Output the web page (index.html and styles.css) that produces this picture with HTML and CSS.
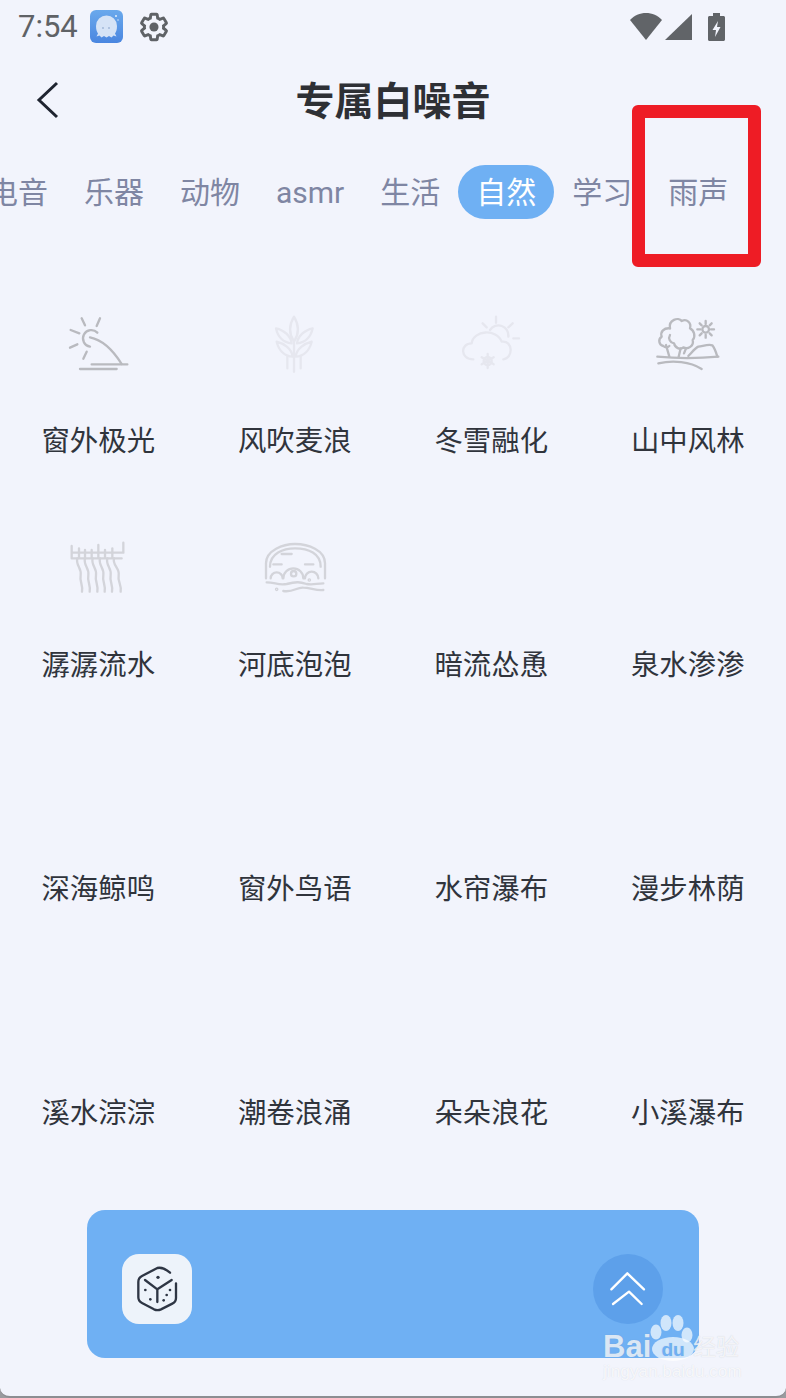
FILE: index.html
```html
<!DOCTYPE html>
<html lang="zh-CN">
<head>
    <meta charset="UTF-8">
    <meta name="viewport" content="width=device-width, initial-scale=1.0">
    <title>专属白噪音</title>
    <link rel="stylesheet" href="styles.css">
</head>
<body>
    <div class="page">
        <div class="status-bar">
            <span class="status-time">7:54</span>
            <svg class="app-icon" viewBox="0 0 33 33">
                <defs>
                    <linearGradient id="appBg" x1="0" y1="0" x2="0" y2="1">
                        <stop offset="0" stop-color="#6aa9ec"/>
                        <stop offset="1" stop-color="#4a86e0"/>
                    </linearGradient>
                </defs>
                <rect width="33" height="33" rx="6" fill="url(#appBg)"/>
                <path d="M6 16a10.500 10.500 0 0 1 21 0c0 4-1 6-2 7.500l1.500 3-3-1-2 2-2.500-1.500-2.500 1.500-2.500-1.500-2.500 1.500-2-2-3 1 1.500-3C7 22 6 20 6 16z" fill="#d5e3f6"/>
                <circle cx="13" cy="18" r="0.900" fill="#9db4d6"/>
                <circle cx="19" cy="18" r="0.900" fill="#9db4d6"/>
                <circle cx="26" cy="6" r="1" fill="#e6f0fb"/>
                <circle cx="28" cy="10" r="0.700" fill="#e6f0fb"/>
            </svg>
            <svg class="gear-icon" viewBox="0 0 24 24">
                <path d="M19.14 12.94c.04-.3.06-.61.06-.94 0-.32-.02-.64-.07-.94l2.030-1.580c.18-.14.23-.41.12-.61l-1.920-3.320c-.12-.22-.37-.29-.59-.22l-2.390.96c-.5-.38-1.030-.7-1.620-.94l-.36-2.540c-.04-.24-.24-.41-.48-.41h-3.840c-.24 0-.43.17-.47.41l-.36 2.540c-.59.24-1.130.57-1.620.94l-2.390-.96c-.22-.08-.47 0-.59.22L2.740 8.870c-.12.21-.08.47.12.61l2.030 1.580c-.05.3-.09.63-.09.94s.02.64.07.94l-2.030 1.580c-.18.14-.23.41-.12.61l1.920 3.320c.12.22.37.29.59.22l2.390-.96c.5.38 1.030.7 1.620.94l.36 2.540c.05.24.24.41.48.41h3.840c.24 0 .44-.17.47-.41l.36-2.540c.59-.24 1.130-.56 1.620-.94l2.390.96c.22.08.47 0 .59-.22l1.920-3.320c.12-.22.07-.47-.12-.61l-2.010-1.580z" fill="none" stroke="#5f6266" stroke-width="2.200"/>
                <circle cx="12" cy="12" r="3.400" fill="#5f6266"/>
            </svg>
            <div class="status-right">
                <svg class="wifi-icon" viewBox="0 0 32 27"><path d="M0 7C4 2.500 10 0 16 0s12 2.500 16 7L16 27z"/></svg>
                <svg class="signal-icon" viewBox="0 0 27 26"><path d="M27 0v26H0z"/></svg>
                <svg class="battery-icon" viewBox="0 0 17 28">
                    <path d="M5 0h7v3h3.500c.8 0 1.500.7 1.500 1.500V26.500c0 .8-.7 1.500-1.500 1.500h-14C.7 28 0 27.300 0 26.500V4.500C0 3.700.7 3 1.500 3H5z"/>
                    <path d="M10 8L4.500 17H8l-1 7 5.500-10H9z" fill="#f2f4fc"/>
                </svg>
            </div>
        </div>

        <div class="header">
            <svg class="back-icon" viewBox="0 0 24 40"><path d="M21 3L3 20l18 17"/></svg>
            <h1>专属白噪音</h1>
        </div>

        <div class="tabs">
            <span class="tab">电音</span>
            <span class="tab">乐器</span>
            <span class="tab">动物</span>
            <span class="tab">asmr</span>
            <span class="tab">生活</span>
            <span class="tab active">自然</span>
            <span class="tab">学习</span>
            <span class="tab">雨声</span>
        </div>

        <div class="sound-grid">
            <div class="sound">
                <svg class="sound-icon dark" viewBox="78 36 192 192">
                    <path d="M125 55l10 21M180 55l-10 23M92 90l26 10M90 143l22-10M130 176l10-21"/>
                    <path d="M172 98a25 25 0 1 0-22 42"/>
                    <path d="M150 112c40 8 70 40 95 80"/>
                    <path d="M155 193h107M120 207h110"/>
                </svg>
                <div class="sound-name">窗外极光</div>
            </div>
            <div class="sound">
                <svg class="sound-icon faint" viewBox="669 36 192 192">
                    <path d="M762 50c-12 20-20 45 0 75 20-30 12-55 0-75z"/>
                    <path d="M708 85c25 5 45 25 47 45-25-2-42-20-47-45zM818 85c-25 5-45 25-47 45 25-2 42-20 47-45z"/>
                    <path d="M710 125c20 5 45 20 48 45-25-2-42-20-48-45zM815 125c-20 5-45 20-48 45 25-2 42-20 48-45z"/>
                    <path d="M762 125v90M742 170v35M782 170v35"/>
                </svg>
                <div class="sound-name">风吹麦浪</div>
            </div>
            <div class="sound">
                <svg class="sound-icon faint" viewBox="57 36 192 192">
                    <path d="M168 50v18M128 70l12 12M218 70l-13 12M220 115h17"/>
                    <path d="M150 90a30 30 0 0 1 55 20"/>
                    <path d="M100 178c-40 0-40-48-5-48 5-40 75-45 90-5 35-5 35 50 5 53"/>
                    <path d="M143 162v42M125 172l36 21M161 172l-36 21"/>
                    <circle cx="143" cy="183" r="12"/>
                </svg>
                <div class="sound-name">冬雪融化</div>
            </div>
            <div class="sound">
                <svg class="sound-icon dark" viewBox="648 36 192 192">
                    <path d="M690 85c-5-25 25-35 35-22 15-8 30 5 25 22 12 5 18 25 8 35 5 18-15 30-28 22-10 8-25 2-28-12-12-2-18-15-12-25"/>
                    <path d="M690 85c-18-2-30 10-25 25-12 8-8 25 5 28 5 5 15 5 18 0"/>
                    <path d="M678 135l10 35M722 145l-6 25M738 145l-6 15"/>
                    <circle cx="797" cy="88" r="10"/>
                    <path d="M797 63v9M797 104v9M772 88h9M813 88h9M779 70l6 6M809 100l6 6M815 70l-6 6M785 100l-6 6"/>
                    <path d="M745 168c10-10 20-24 30-28 15-2 30-8 42-4 8 10 12 24 15 34"/>
                    <path d="M652 170c60 6 120 6 183 0"/>
                    <path d="M655 190c45-10 95-5 130 17"/>
                </svg>
                <div class="sound-name">山中风林</div>
            </div>

            <div class="sound">
                <svg class="sound-icon mid" viewBox="48 18 192 192">
                    <path d="M65 48v37M220 38v30M65 68h155M65 85h150M87 55v30M105 60v25M125 60v25M145 45v40M165 60v25M187 55v30"/>
                    <path d="M82 85c-6 20 14 30 10 50s8 30 4 50M105 85c-6 20 14 30 10 50s8 30 4 50M128 85c-6 20 14 30 10 50s8 30 4 50M150 85c-6 20 14 30 10 50s8 30 4 50M172 85c-6 20 14 30 10 50s8 30 4 50M192 85c-6 20 18 30 14 50s10 30 6 50"/>
                </svg>
                <div class="sound-name">潺潺流水</div>
            </div>
            <div class="sound">
                <svg class="sound-icon mid" viewBox="639 18 192 192">
                    <path d="M648 145v-45c0-40 52-58 87-58 40 0 90 18 90 58v45"/>
                    <path d="M660 110c0-40 40-55 75-55 40 0 77 15 77 55"/>
                    <path d="M662 145a18 18 0 0 1 36 0M700 145a30 30 0 0 1 60 0M765 145a20 20 0 0 1 40 0"/>
                    <circle cx="731" cy="131" r="8"/>
                    <path d="M695 72h30M670 103h25M765 103h25"/>
                    <path d="M650 157c25 0 35 10 60 5 30-8 40-6 60 0 20 4 30-2 50-2M700 183c30 5 40-12 60-10 20 0 40 10 60 7"/>
                    <circle cx="680" cy="178" r="2"/>
                    <circle cx="778" cy="150" r="2"/>
                </svg>
                <div class="sound-name">河底泡泡</div>
            </div>
            <div class="sound"><div class="icon-slot"></div><div class="sound-name">暗流怂恿</div></div>
            <div class="sound"><div class="icon-slot"></div><div class="sound-name">泉水渗渗</div></div>

            <div class="sound"><div class="icon-slot"></div><div class="sound-name">深海鲸鸣</div></div>
            <div class="sound"><div class="icon-slot"></div><div class="sound-name">窗外鸟语</div></div>
            <div class="sound"><div class="icon-slot"></div><div class="sound-name">水帘瀑布</div></div>
            <div class="sound"><div class="icon-slot"></div><div class="sound-name">漫步林荫</div></div>

            <div class="sound"><div class="icon-slot"></div><div class="sound-name">溪水淙淙</div></div>
            <div class="sound"><div class="icon-slot"></div><div class="sound-name">潮卷浪涌</div></div>
            <div class="sound"><div class="icon-slot"></div><div class="sound-name">朵朵浪花</div></div>
            <div class="sound"><div class="icon-slot"></div><div class="sound-name">小溪瀑布</div></div>
        </div>

        <div class="player">
            <div class="dice-btn">
                <svg viewBox="156 192 210 210">
                    <path d="M300 248c-12-10-26-17-38-14l-46 24c-8 4-11 8-11 18v46c0 9 3 13 11 17l36 19c7 3 14 3 21 0l34-17c8-4 11-8 11-17v-44"/>
                    <path d="M225 270l37 28 43-28M262 298v38"/>
                    <circle class="dot" cx="264" cy="262" r="5"/>
                    <circle class="dot" cx="226" cy="300" r="4"/>
                    <circle class="dot" cx="241" cy="328" r="4"/>
                    <circle class="dot" cx="300" cy="300" r="4"/>
                    <circle class="dot" cx="290" cy="315" r="4"/>
                    <circle class="dot" cx="281" cy="331" r="4"/>
                </svg>
            </div>
            <div class="up-btn">
                <svg viewBox="162 192 210 210">
                    <path d="M217 298l48-48 50 48M222 342l48-37 38 37"/>
                </svg>
            </div>
        </div>

        <!-- red marker drawn on top of the screenshot -->
        <div class="marker"></div>

        <div class="watermark">
            <div class="wm-logo">
                <span class="wm-bai">Bai</span>
                <svg class="wm-paw" viewBox="0 0 50 50">
                    <ellipse cx="8" cy="18" rx="5.500" ry="7.500"/>
                    <ellipse cx="18" cy="9" rx="5.500" ry="8"/>
                    <ellipse cx="30" cy="9" rx="5.500" ry="8"/>
                    <ellipse cx="39" cy="21" rx="5.500" ry="7.500"/>
                    <ellipse cx="25" cy="35" rx="21" ry="12"/>
                    <text x="25" y="42" text-anchor="middle">du</text>
                </svg>
                <span class="wm-jy">经验</span>
            </div>
            <div class="wm-url">jingyan.baidu.com</div>
        </div>
    </div>
</body>
</html>
```

FILE: styles.css
```css
* {
    margin: 0;
    padding: 0;
    box-sizing: border-box;
}

body {
    background-color: #9a9b9f;
    font-family: 'Roboto', 'Noto Sans CJK SC', sans-serif;
}

.page {
    position: relative;
    width: 786px;
    height: 1398px;
    overflow: hidden;
    background-color: #f2f4fc;
    border-bottom: 2px solid #8d8e92;
    border-radius: 0 0 10px 10px;
}

/* status bar */
.status-bar {
    display: flex;
    align-items: center;
    height: 53px;
    padding-left: 18px;
}

.status-time {
    font-size: 31px;
    line-height: 53px;
    color: #5f6266;
    width: 72px;
}

.app-icon {
    width: 33px;
    height: 33px;
}

.gear-icon {
    width: 32px;
    height: 32px;
    margin-left: 15px;
}

.status-right {
    display: flex;
    align-items: center;
    margin-left: auto;
    margin-right: 61px;
    fill: #616468;
}

.wifi-icon {
    width: 32px;
    height: 27px;
}

.signal-icon {
    width: 27px;
    height: 26px;
    margin-left: 3px;
}

.battery-icon {
    width: 17px;
    height: 28px;
    margin-left: 16px;
}

/* header */
.header {
    display: flex;
    align-items: center;
    justify-content: center;
    position: relative;
    height: 97px;
}

.back-icon {
    position: absolute;
    left: 36px;
    top: 27px;
    width: 24px;
    height: 40px;
    fill: none;
    stroke: #1f2430;
    stroke-width: 3;
}

h1 {
    font-size: 39px;
    font-weight: 700;
    line-height: 50px;
    color: #2e3035;
}

/* category tabs */
.tabs {
    display: flex;
    margin-top: 15px;
    margin-left: -30px;
    height: 54px;
}

.tab {
    flex: none;
    height: 54px;
    padding: 0 18px;
    font-size: 30px;
    line-height: 56px;
    color: #7f86a3;
    border-radius: 27px;
}

.tab.active {
    background-color: #6fb0f3;
    color: #ffffff;
}

/* sounds */
.sound-grid {
    display: grid;
    grid-template-columns: repeat(4, 196.5px);
    grid-auto-rows: 224px;
    margin-top: 63px;
}

.sound {
    display: flex;
    flex-direction: column;
    align-items: center;
    padding-top: 30px;
}

.sound-icon,
.icon-slot {
    width: 64px;
    height: 64px;
}

.sound-icon {
    fill: none;
    stroke-width: 7;
    stroke-linecap: round;
    stroke-linejoin: round;
}

.sound-icon.dark {
    stroke: #b9babf;
}

.sound-icon.mid {
    stroke: #d3d4da;
}

.sound-icon.faint {
    stroke: #e6e7ef;
}

.sound-name {
    margin-top: 46px;
    font-size: 28.400px;
    line-height: 40px;
    color: #30343c;
}

/* player */
.player {
    display: flex;
    align-items: center;
    justify-content: space-between;
    width: 612px;
    height: 148px;
    margin: 32px 0 0 87px;
    padding: 10px 36px 0 35px;
    background-color: #6fb0f3;
    border-radius: 18px;
}

.dice-btn,
.up-btn {
    width: 70px;
    height: 70px;
}

.dice-btn {
    background-color: #edf3fa;
    border-radius: 17px;
}

.up-btn {
    background-color: #5da0ea;
    border-radius: 50%;
}

.dice-btn svg,
.up-btn svg {
    display: block;
    width: 70px;
    height: 70px;
    fill: none;
    stroke-width: 7;
    stroke-linecap: round;
    stroke-linejoin: round;
}

.dice-btn svg {
    stroke: #2e3644;
}

.dice-btn .dot {
    fill: #2e3644;
    stroke: none;
}

.up-btn svg {
    stroke: #ffffff;
}

/* overlays */
.marker {
    position: absolute;
    left: 632px;
    top: 105px;
    width: 129px;
    height: 162px;
    border: 13px solid #ee1c25;
    border-radius: 6px;
}

.watermark {
    position: absolute;
    left: 603px;
    top: 1314px;
    width: 145px;
    color: rgba(255, 255, 255, 0.75);
    text-shadow: 0 0 1px rgba(110, 120, 140, 0.3);
}

.wm-logo {
    display: flex;
    align-items: flex-end;
    height: 50px;
}

.wm-bai {
    flex: none;
    font-family: 'Liberation Sans', sans-serif;
    font-weight: 700;
    font-size: 31px;
    line-height: 34px;
    width: 45px;
}

.wm-paw {
    flex: none;
    width: 50px;
    height: 50px;
    fill: rgba(255, 255, 255, 0.68);
}

.wm-paw text {
    font-family: 'Liberation Sans', sans-serif;
    font-size: 19px;
    font-weight: 700;
    fill: #6fb0f3;
}

.wm-jy {
    flex: none;
    font-family: 'Noto Sans CJK SC', sans-serif;
    font-size: 23px;
    line-height: 30px;
    margin: 0 0 4px -5px;
}

.wm-url {
    font-family: 'Liberation Sans', sans-serif;
    font-size: 17.200px;
    line-height: 14px;
    white-space: nowrap;
    color: rgba(255, 255, 255, 0.8);
    text-shadow: 0 0 1px rgba(110, 120, 140, 0.22);
}
```
